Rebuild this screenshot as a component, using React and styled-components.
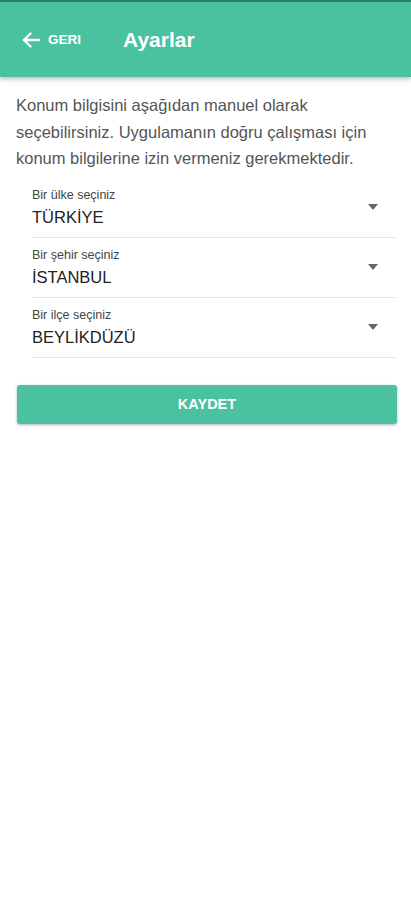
import React from 'react';
import styled, { createGlobalStyle } from 'styled-components';

const GlobalStyle = createGlobalStyle`
  html, body {
    margin: 0;
    padding: 0;
    background: #ffffff;
    font-family: "Liberation Sans", Arial, sans-serif;
  }
`;

const Page = styled.div`
  min-height: 900px;
  background: #fff;
`;

const Header = styled.header`
  height: 75px;
  border-top: 2px solid #2f7e69;
  background: #4ac2a0;
  display: flex;
  align-items: center;
  padding: 0 0 0 22px;
  box-shadow: 0 2px 5px rgba(0, 0, 0, 0.28);
  color: #fff;
`;

const BackButton = styled.button`
  display: flex;
  align-items: center;
  gap: 8px;
  background: none;
  border: none;
  padding: 0;
  color: #fff;
  font-family: inherit;
  font-size: 13.5px;
  font-weight: bold;
  cursor: pointer;
`;

const Title = styled.h1`
  margin: 0 0 0 42px;
  font-size: 21px;
  font-weight: bold;
  color: #fff;
`;

const Content = styled.main`
  padding: 15px 10px 0 16px;
`;

const Intro = styled.p`
  margin: 0;
  font-size: 16.5px;
  line-height: 26.5px;
  color: #555;
`;

const Fields = styled.div`
  margin: 6px 5px 0 16px;
  display: flex;
  flex-direction: column;
`;

const Field = styled.div`
  display: flex;
  align-items: center;
  justify-content: space-between;
  height: 59px;
  border-bottom: 1px solid #e8e8e8;
  padding-right: 18px;
`;

const FieldText = styled.div`
  display: flex;
  flex-direction: column;
  gap: 6px;
`;

const Label = styled.span`
  font-size: 12.5px;
  color: #444;
`;

const Value = styled.span`
  font-size: 16.5px;
  color: #222;
`;

const Caret = styled.span`
  width: 0;
  height: 0;
  border-left: 5.5px solid transparent;
  border-right: 5.5px solid transparent;
  border-top: 6px solid #666;
`;

const SaveButton = styled.button`
  display: block;
  width: 380px;
  height: 39px;
  margin: 27px 0 0 1px;
  background: #4ac2a0;
  border: none;
  border-radius: 3px;
  box-shadow: 0 1px 3px rgba(0, 0, 0, 0.3);
  color: #fff;
  font-family: inherit;
  font-size: 14.5px;
  font-weight: bold;
  cursor: pointer;
`;

const fields = [
  { label: 'Bir ülke seçiniz', value: 'TÜRKİYE' },
  { label: 'Bir şehir seçiniz', value: 'İSTANBUL' },
  { label: 'Bir ilçe seçiniz', value: 'BEYLİKDÜZÜ' },
];

const App = () => {
  return (
    <Page>
      <GlobalStyle />
      <Header>
        <BackButton>
          <svg width="18" height="16" viewBox="0 0 18 16" fill="none">
            <path d="M17 8H2M8.5 1.5L2 8l6.5 6.5" stroke="#fff" strokeWidth="2.4" strokeLinecap="round" strokeLinejoin="round" />
          </svg>
          GERI
        </BackButton>
        <Title>Ayarlar</Title>
      </Header>
      <Content>
        <Intro>
          Konum bilgisini aşağıdan manuel olarak seçebilirsiniz. Uygulamanın doğru çalışması için konum bilgilerine izin vermeniz gerekmektedir.
        </Intro>
        <Fields>
          {fields.map((f) => (
            <Field key={f.label}>
              <FieldText>
                <Label>{f.label}</Label>
                <Value>{f.value}</Value>
              </FieldText>
              <Caret />
            </Field>
          ))}
        </Fields>
        <SaveButton>KAYDET</SaveButton>
      </Content>
    </Page>
  );
};

export default App;
